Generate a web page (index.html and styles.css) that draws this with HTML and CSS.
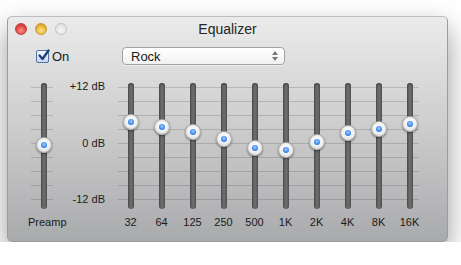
FILE: index.html
```html
<!DOCTYPE html>
<html lang="en">
<head>
    <meta charset="UTF-8">
    <meta name="viewport" content="width=device-width, initial-scale=1.0">
    <title>Equalizer</title>
    <link rel="stylesheet" href="styles.css">
</head>
<body>
    <div class="window">
        <div class="titlebar">
            <div class="lights">
                <span class="light close"></span>
                <span class="light minimize"></span>
                <span class="light zoom"></span>
            </div>
            <div class="title">Equalizer</div>
        </div>

        <div class="controls">
            <label class="toggle">
                <span class="checkbox">
                    <svg width="13" height="13" viewBox="0 0 13 13">
                        <path d="M2.5 6.5 L5.5 10 L11.5 1.5" fill="none" stroke="#1c3c70" stroke-width="2.2" stroke-linecap="round" stroke-linejoin="round"/>
                    </svg>
                </span>
                <span>On</span>
            </label>
            <div class="popup">
                <span>Rock</span>
                <svg class="arrows" width="6" height="10" viewBox="0 0 6 10">
                    <path d="M0 4 L3 0 L6 4 Z" fill="#777"/>
                    <path d="M0 6 L3 10 L6 6 Z" fill="#777"/>
                </svg>
            </div>
        </div>

        <div class="sliders">
            <div class="group preamp">
                <div class="tracks">
                    <div class="band"><div class="track"><span class="knob" style="top: 62px"></span></div></div>
                </div>
                <div class="labels">
                    <div class="name">Preamp</div>
                </div>
            </div>

            <div class="scale">
                <div>+12 dB</div>
                <div>0 dB</div>
                <div>-12 dB</div>
            </div>

            <div class="group bands">
                <div class="tracks">
                    <div class="band"><div class="track"><span class="knob" style="top: 39px"></span></div></div>
                    <div class="band"><div class="track"><span class="knob" style="top: 44px"></span></div></div>
                    <div class="band"><div class="track"><span class="knob" style="top: 49px"></span></div></div>
                    <div class="band"><div class="track"><span class="knob" style="top: 56px"></span></div></div>
                    <div class="band"><div class="track"><span class="knob" style="top: 65px"></span></div></div>
                    <div class="band"><div class="track"><span class="knob" style="top: 67px"></span></div></div>
                    <div class="band"><div class="track"><span class="knob" style="top: 59px"></span></div></div>
                    <div class="band"><div class="track"><span class="knob" style="top: 50px"></span></div></div>
                    <div class="band"><div class="track"><span class="knob" style="top: 46px"></span></div></div>
                    <div class="band"><div class="track"><span class="knob" style="top: 41px"></span></div></div>
                </div>
                <div class="labels">
                    <div class="name">32</div>
                    <div class="name">64</div>
                    <div class="name">125</div>
                    <div class="name">250</div>
                    <div class="name">500</div>
                    <div class="name">1K</div>
                    <div class="name">2K</div>
                    <div class="name">4K</div>
                    <div class="name">8K</div>
                    <div class="name">16K</div>
                </div>
            </div>
        </div>
    </div>
</body>
</html>
```

FILE: styles.css
```css
body {
    margin: 0;
    background: #fff;
    font-family: "Liberation Sans", Arial, sans-serif;
    color: #1a1a1a;
}

.window {
    box-sizing: border-box;
    width: 441px;
    height: 226px;
    margin: 16px 0 0 7px;
    border: 1px solid #9c9c9c;
    border-top-color: #bdbdbd;
    border-radius: 5px;
    background: linear-gradient(#ebebeb, #c9c9ca 55%, #a9aaac);
    box-shadow: 0 12px 28px rgba(0, 0, 0, 0.4);
}

.titlebar {
    display: grid;
    grid-template-columns: 1fr auto 1fr;
    align-items: center;
    height: 22px;
}

.lights {
    display: flex;
    gap: 8px;
    padding-left: 7px;
    padding-top: 1px;
}

.light {
    width: 12px;
    height: 12px;
    border-radius: 50%;
    box-sizing: border-box;
}

.close {
    background: radial-gradient(circle at 50% 65%, #ff8d87, #e0443e 60%, #b5302b);
    border: 1px solid #c0403a;
}

.minimize {
    background: radial-gradient(circle at 50% 65%, #ffe38a, #e5b23a 60%, #b98a1f);
    border: 1px solid #c9992c;
}

.zoom {
    background: radial-gradient(circle at 50% 65%, #f4f4f4, #dcdcdc);
    border: 1px solid #c2c2c2;
}

.title {
    font-size: 14px;
    color: #262626;
    padding-top: 1px;
}

.controls {
    display: flex;
    align-items: center;
    height: 18px;
    margin-top: 8px;
    padding-left: 28px;
}

.toggle {
    display: flex;
    align-items: center;
    gap: 3px;
    width: 86px;
    font-size: 13px;
}

.checkbox {
    box-sizing: border-box;
    width: 13px;
    height: 13px;
    border: 1px solid #52739e;
    border-radius: 2px;
    background: linear-gradient(#f3f7fd, #c4d8f2);
    position: relative;
}

.checkbox svg {
    position: absolute;
    left: 0;
    top: -2px;
}

.popup {
    box-sizing: border-box;
    display: flex;
    align-items: center;
    justify-content: space-between;
    width: 163px;
    height: 18px;
    padding: 0 6px 0 8px;
    border: 1px solid #a3a3a3;
    border-radius: 4px;
    background: linear-gradient(#ffffff, #f1f1f1);
    box-shadow: 0 1px 0 rgba(255, 255, 255, 0.5);
    font-size: 13px;
}

.sliders {
    display: flex;
    margin-top: 18px;
    padding-left: 20px;
}

.tracks {
    display: flex;
    background-image: repeating-linear-gradient(to bottom,
        transparent 0 4px,
        rgba(0, 0, 0, 0.15) 4px 5px,
        transparent 5px 14px);
    background-repeat: no-repeat;
    background-position: 3px 0;
    background-size: calc(100% - 9px) 117px;
}

.band {
    width: 31px;
    display: flex;
    justify-content: center;
}

.track {
    position: relative;
    width: 6px;
    height: 126px;
    border-radius: 3px;
    background: linear-gradient(to right, #555, #6e6e6e 50%, #5a5a5a);
    box-shadow: inset 0 1px 2px rgba(0, 0, 0, 0.4);
}

.knob {
    position: absolute;
    left: 50%;
    width: 16px;
    height: 16px;
    margin: -8px 0 0 -8px;
    box-sizing: border-box;
    border-radius: 50%;
    border: 1px solid rgba(0, 0, 0, 0.25);
    background: radial-gradient(circle at 50% 40%, #ffffff, #eeeeee 55%, #c9c9c9);
    box-shadow: 0 1px 2px rgba(0, 0, 0, 0.45);
}

.knob::after {
    content: "";
    position: absolute;
    left: 4px;
    top: 4px;
    width: 6px;
    height: 6px;
    border-radius: 50%;
    background: radial-gradient(circle at 50% 40%, #9fd0ff, #3b86ee 60%, #1a5fcf);
}

.labels {
    display: flex;
    margin-top: 7px;
}

.name {
    width: 31px;
    text-align: center;
    font-size: 11px;
    line-height: 13px;
    white-space: nowrap;
}

.preamp .tracks {
    background-size: 22px 117px;
}

.scale {
    display: flex;
    flex-direction: column;
    justify-content: space-between;
    align-items: flex-end;
    width: 56px;
    height: 126px;
    margin-top: -3px;
    padding-right: 10px;
    box-sizing: border-box;
    font-size: 11px;
    line-height: 13px;
}
```
